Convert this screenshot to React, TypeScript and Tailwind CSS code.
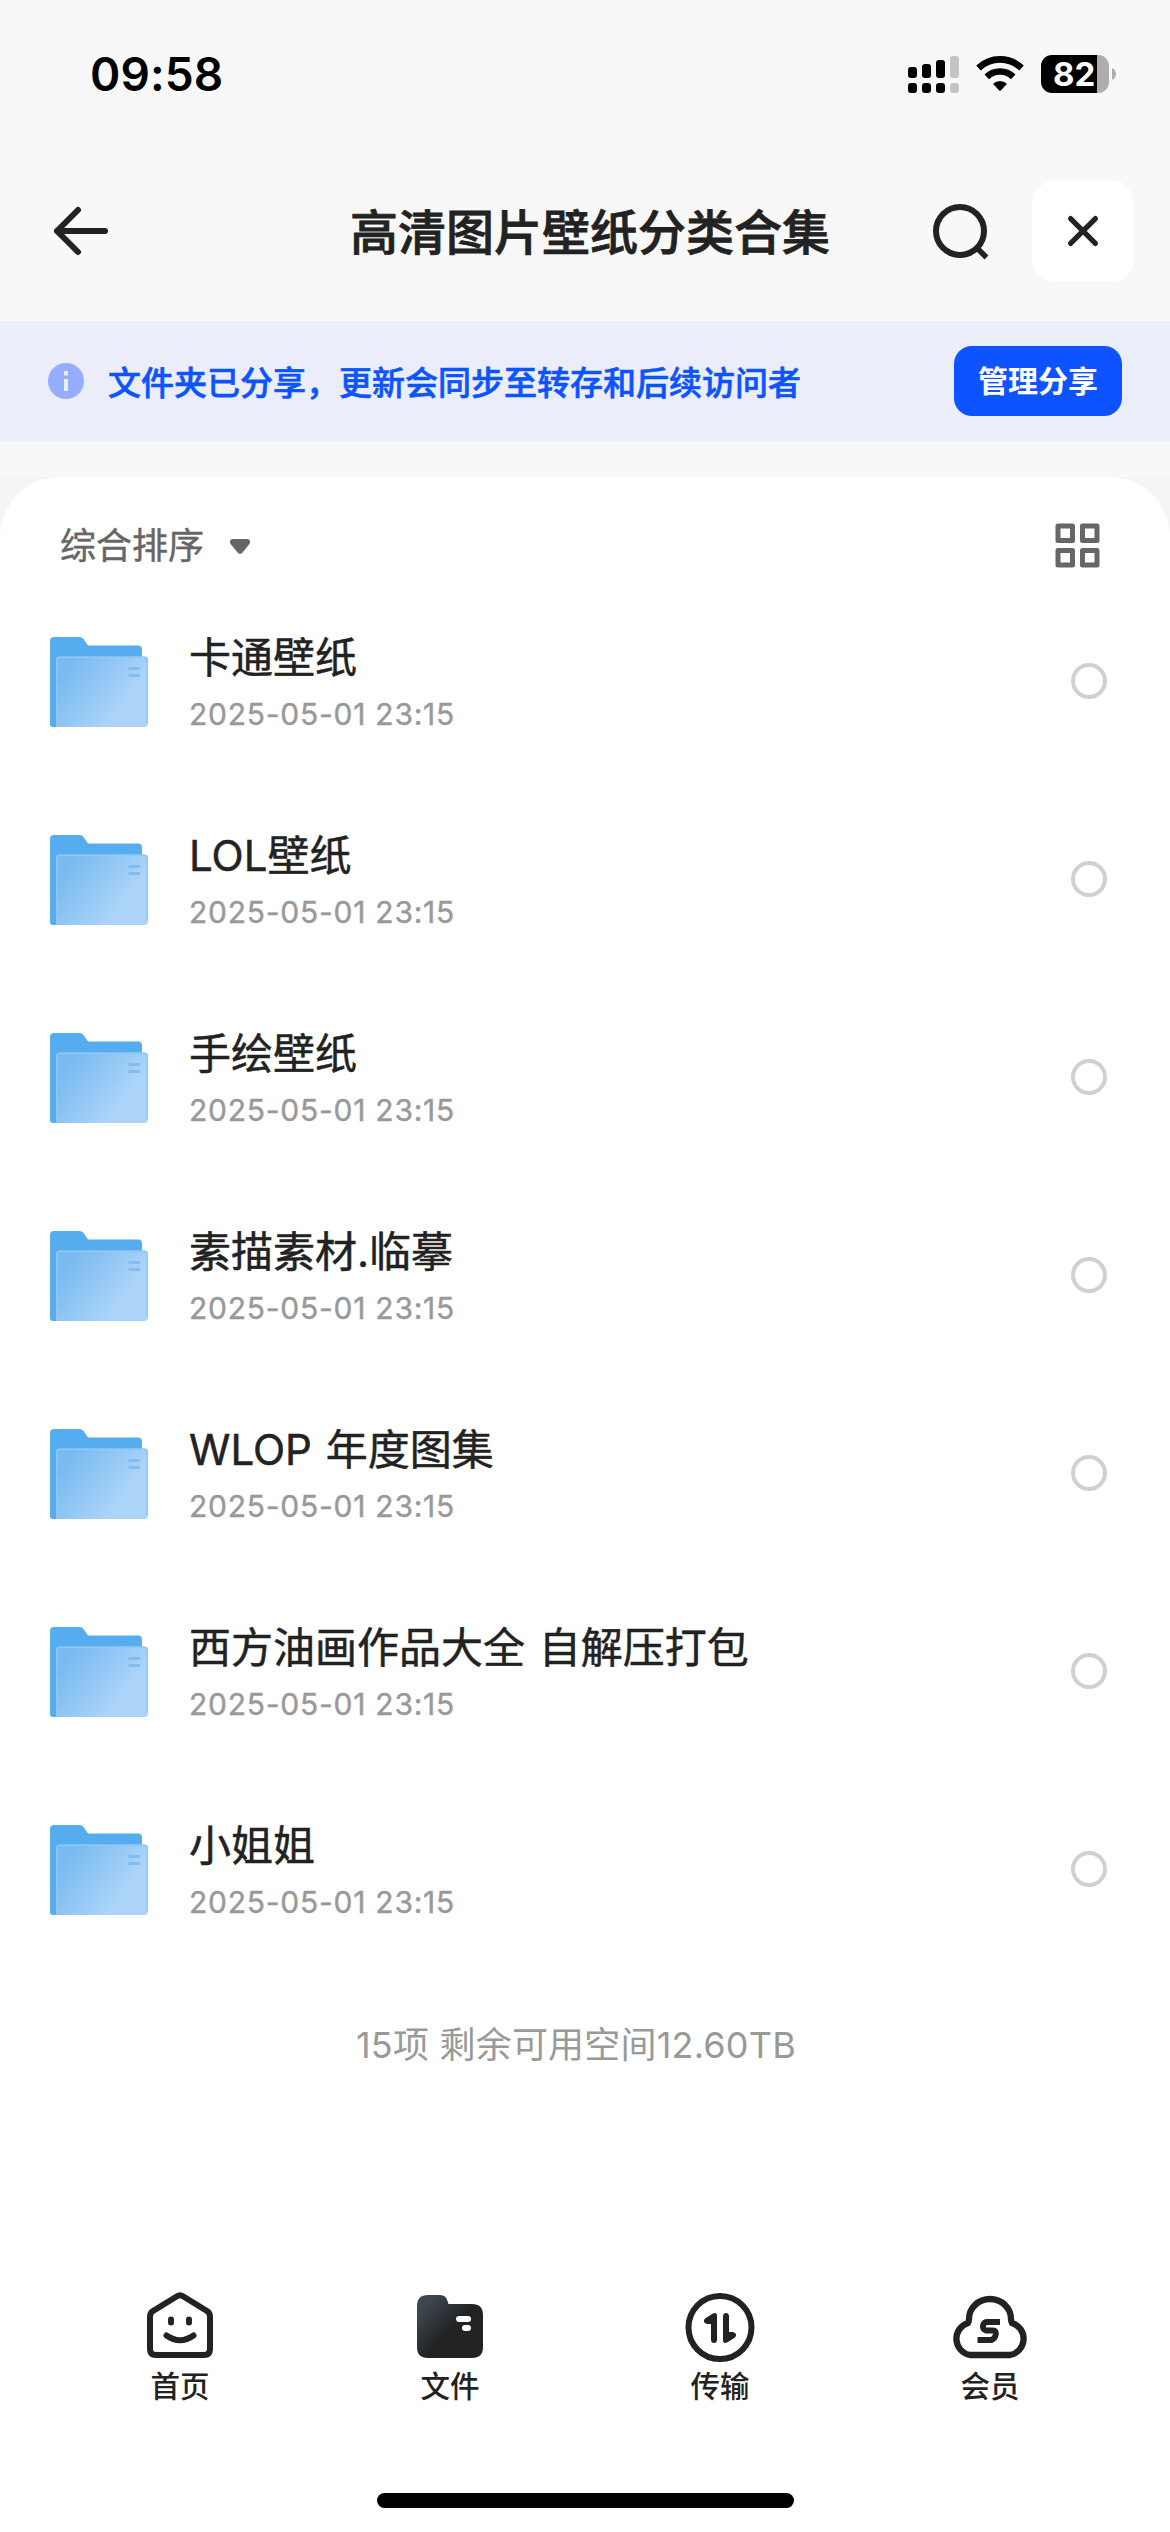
const folders = [
  "卡通壁纸",
  "LOL壁纸",
  "手绘壁纸",
  "素描素材.临摹",
  "WLOP 年度图集",
  "西方油画作品大全 自解压打包",
  "小姐姐",
];

function StatusBar() {
  return (
    <div className="h-[150px] flex justify-between pl-[90px] pr-[54px]">
      <div className="pt-[46px] text-[46px] leading-[56px] font-semibold text-black tracking-[0.1px]">09:58</div>
      <div className="flex items-center h-[38px] mt-[55px]">
        <svg className="w-[52px] h-[38px]" viewBox="0 0 52 38">
          <g fill="#000">
            <rect x="0" y="12" width="9" height="11" rx="3" />
            <rect x="14" y="9" width="9" height="14" rx="3" />
            <rect x="28" y="5" width="9" height="18" rx="3" />
            <rect x="0" y="28" width="9" height="10" rx="3" />
            <rect x="14" y="28" width="9" height="10" rx="3" />
            <rect x="28" y="28" width="9" height="10" rx="3" />
          </g>
          <g fill="#c4c4c4">
            <rect x="42" y="1" width="9" height="22" rx="3" />
            <rect x="42" y="28" width="9" height="10" rx="3" />
          </g>
        </svg>
        <svg className="w-[50px] h-[38px] ml-[15px]" viewBox="0 0 50 38">
          <path d="M3.5 13A31 31 0 0 1 46.5 13" fill="none" stroke="#000" strokeWidth="6.600" />
          <path d="M11.8 21.8A19 19 0 0 1 38.2 21.8" fill="none" stroke="#000" strokeWidth="6.600" />
          <path d="M18 28.8Q25 23 32 28.8L25.8 35.4Q25 36.2 24.2 35.4Z" fill="#000" />
        </svg>
        <div className="flex items-center ml-[16px]">
          <div className="w-[68px] h-[38px] rounded-[11px] bg-[linear-gradient(to_right,#000_56px,#adadad_56px)] pl-[12px] text-[33px] leading-[38px] font-bold text-white">
            82
          </div>
          <svg className="w-[4px] h-[12px] ml-[3px]" viewBox="0 0 4 12">
            <path d="M0 0Q4 2 4 6T0 12Z" fill="#adadad" />
          </svg>
        </div>
      </div>
    </div>
  );
}

function Header() {
  return (
    <header className="h-[171px] pt-[30px] pl-[48px] pr-[36px] flex items-start">
      <div className="w-[302px] h-[102px] flex items-center">
        <svg className="w-[66px] h-[66px]" viewBox="0 0 66 66" fill="none" stroke="#222" strokeWidth="6" strokeLinecap="round" strokeLinejoin="round">
          <path d="M30 12L9 33L30 54M9 33H57" />
        </svg>
      </div>
      <h1 className="text-[48px] leading-[105px] font-medium text-[#222] whitespace-nowrap [-webkit-text-stroke:0.8px_#222]">
        高清图片壁纸分类合集
      </h1>
      <div className="ml-auto h-[102px] flex items-center gap-[39px]">
        <svg className="w-[66px] h-[66px]" viewBox="0 0 66 66" fill="none" stroke="#222" strokeWidth="6">
          <circle cx="33" cy="33" r="24" />
          <path d="M50 50L59.5 59.5" strokeWidth="5.5" />
        </svg>
        <button className="w-[102px] h-[102px] rounded-[24px] bg-white flex items-center justify-center">
          <svg className="w-[36px] h-[36px]" viewBox="0 0 36 36" fill="none" stroke="#222" strokeWidth="5.2" strokeLinecap="round">
            <path d="M5.6 5.6L30.4 30.4M30.4 5.6L5.6 30.4" />
          </svg>
        </button>
      </div>
    </header>
  );
}

function ShareBanner() {
  return (
    <div className="h-[120px] bg-[#ebeefa] flex items-center px-[48px]">
      <svg className="w-[36px] h-[36px]" viewBox="0 0 36 36">
        <circle cx="18" cy="18" r="18" fill="#94adff" />
        <path d="M16 8h4v4.5h-4zM16 16h4v12h-4z" fill="#ebeefa" />
      </svg>
      <p className="ml-[24px] pt-[3px] text-[33px] leading-[48px] font-medium text-[#0d53ff] whitespace-nowrap [-webkit-text-stroke:0.6px_#0d53ff]">
        文件夹已分享，更新会同步至转存和后续访问者
      </p>
      <button className="ml-auto w-[168px] h-[70px] rounded-[18px] bg-[#0d53ff] text-white text-[30px] leading-[70px] font-bold">
        管理分享
      </button>
    </div>
  );
}

function FolderIcon() {
  return (
    <svg className="w-[98px] h-[90px] shrink-0" viewBox="0 0 98 90">
      <defs>
        <linearGradient id="folder-front" x1="20" y1="30" x2="85" y2="80" gradientUnits="userSpaceOnUse">
          <stop offset="0" stopColor="#79bbf0" />
          <stop offset="0.8" stopColor="#acd4f9" />
        </linearGradient>
      </defs>
      <path d="M0 4Q0 0 4 0H29.500Q32 0 33.500 2L38 8.500H88Q92 8.500 92 12.500V60L6 90H3Q0 90 0 87Z" fill="#55acef" />
      <path d="M6 23Q6 19.500 9.500 19.500H94Q98 19.500 98 23.500V86Q98 90 94 90H6Z" fill="url(#folder-front)" />
      <path d="M6.750 90V23Q6.750 20.250 9.500 20.250H94Q97.250 20.250 97.250 23.500V86" fill="none" stroke="#8fc7f5" strokeWidth="1.500" />
      <path d="M78.500 31.500H90M78.500 38.500H90" stroke="#84bdf1" strokeWidth="3" />
    </svg>
  );
}

function FolderRow({ name }: { name: string }) {
  return (
    <li className="h-[198px] flex items-center pl-[50px] pr-[63px]">
      <div className="pt-[2px]">
        <FolderIcon />
      </div>
      <div className="ml-[41px] pt-[1px] flex-1">
        <div className="text-[42px] leading-[60px] text-[#222] whitespace-nowrap [word-spacing:2px] [-webkit-text-stroke:0.5px_#222]">
          {name}
        </div>
        <div className="text-[30px] leading-[42px] mt-[5px] text-[#999] tracking-[0.75px] [-webkit-text-stroke:0.4px_#999]">
          2025-05-01 23:15
        </div>
      </div>
      <div className="w-[36px] h-[36px] rounded-full border-4 border-[#cfcfd6]" />
    </li>
  );
}

function FileList() {
  return (
    <main className="bg-[#f4f5f7]">
      <div className="h-[1763px] rounded-t-[60px] bg-white">
        <div className="h-[105px] pt-[32px] flex items-center pl-[60px] pr-[70px]">
          <span className="text-[36px] leading-[48px] text-[#666] [-webkit-text-stroke:0.4px_#666]">综合排序</span>
          <svg className="w-[20px] h-[15px] ml-[26px] mt-[2px]" viewBox="0 0 20 15">
            <path d="M3 0H17Q20 0 20 3Q20 4 19 5.500L12.500 13.500Q10 16 7.500 13.500L1 5.500Q0 4 0 3Q0 0 3 0Z" fill="#666" />
          </svg>
          <svg className="w-[45px] h-[45px] ml-auto" viewBox="0 0 45 45" fill="none" stroke="#666" strokeWidth="5" strokeLinejoin="round">
            <rect x="3" y="3" width="14.500" height="14.500" />
            <rect x="27.500" y="3" width="14.500" height="14.500" />
            <rect x="3" y="27.500" width="14.500" height="14.500" />
            <rect x="27.500" y="27.500" width="14.500" height="14.500" />
          </svg>
        </div>
        <ul>
          {folders.map((name) => (
            <FolderRow key={name} name={name} />
          ))}
        </ul>
        <p className="mt-[47px] pr-[18px] text-center text-[36px] leading-[60px] text-[#999] tracking-[0.2px]">
          15项 剩余可用空间12.60TB
        </p>
      </div>
    </main>
  );
}

function HomeIcon() {
  return (
    <svg className="w-[72px] h-[72px]" viewBox="0 0 72 72" fill="none" stroke="#222" strokeWidth="6" strokeLinecap="round" strokeLinejoin="round">
      <path d="M33 7.300Q36 5.200 39 7.300L63 22Q66 24 66 27.500V60Q66 66 60 66H12Q6 66 6 60V27.500Q6 24 9 22Z" />
      <path d="M27 30.500V33.500M45 30.500V33.500" />
      <path d="M22.500 46.500Q36 56 49.500 46.500" />
    </svg>
  );
}

function FilesIcon() {
  return (
    <svg className="w-[72px] h-[72px]" viewBox="0 0 72 72">
      <defs>
        <linearGradient id="files-tab" x1="9" y1="14" x2="37" y2="40" gradientUnits="userSpaceOnUse">
          <stop offset="0.100" stopColor="#3d464f" />
          <stop offset="1" stopColor="#222" />
        </linearGradient>
      </defs>
      <path d="M3 17Q3 6 14 6H26Q32 6 33.500 12L34.500 15H58Q69 15 69 26V58Q69 69 58 69H14Q3 69 3 58Z" fill="url(#files-tab)" />
      <rect x="42" y="27" width="15" height="6" rx="3" fill="#fff" />
      <rect x="48" y="36" width="9" height="6" rx="3" fill="#fff" />
    </svg>
  );
}

function TransferIcon() {
  return (
    <svg className="w-[72px] h-[72px] overflow-visible" viewBox="0 0 72 72">
      <circle cx="36" cy="38.500" r="31.500" fill="none" stroke="#222" strokeWidth="6" />
      <path d="M27 50.500V35H23Q18 33.500 21 29.500L29 24.500Q33 23 33 27V50.500Q33 54 30 54T27 50.500Z" fill="#222" />
      <path d="M45 27.500V43H49Q54 44.500 51 48.500L43 53.500Q39 55 39 51V27.500Q39 24 42 24T45 27.500Z" fill="#222" />
    </svg>
  );
}

function MemberIcon() {
  return (
    <svg className="w-[72px] h-[72px] overflow-visible" viewBox="0 0 72 72" fill="none" stroke="#222">
      <path d="M16 66H56A16.500 16.500 0 0 0 58 34Q57 32.500 57 30A21 20 0 0 0 15 30Q15 32.500 14 34A16.500 16.500 0 0 0 16 66Z" strokeWidth="6.300" />
      <path d="M46 33H33.500Q29.800 33 29 36.500T32 41.500H39Q42.500 41.500 41.800 45.500T37.500 51H23.500" strokeWidth="5.800" />
    </svg>
  );
}

const tabs = [
  { label: "首页", Icon: HomeIcon },
  { label: "文件", Icon: FilesIcon },
  { label: "传输", Icon: TransferIcon },
  { label: "会员", Icon: MemberIcon },
];

function TabBar() {
  return (
    <nav className="h-[292px] bg-white flex flex-col">
      <div className="flex px-[45px] pt-[49px]">
        {tabs.map(({ label, Icon }) => (
          <div key={label} className="flex-1 flex flex-col items-center">
            <Icon />
            <span className="mt-[4px] text-[29.500px] leading-[42px] text-[#222] font-medium">{label}</span>
          </div>
        ))}
      </div>
      <div className="w-[417px] h-[15px] rounded-full bg-black mx-auto mt-auto mb-[24px]" />
    </nav>
  );
}

export default function App() {
  return (
    <div className="w-[1170px] h-[2532px] overflow-hidden bg-[#f8f8f8] font-['Inter','Noto_Sans_CJK_SC',sans-serif]">
      <StatusBar />
      <Header />
      <ShareBanner />
      <div className="h-[36px]" />
      <FileList />
      <TabBar />
    </div>
  );
}
